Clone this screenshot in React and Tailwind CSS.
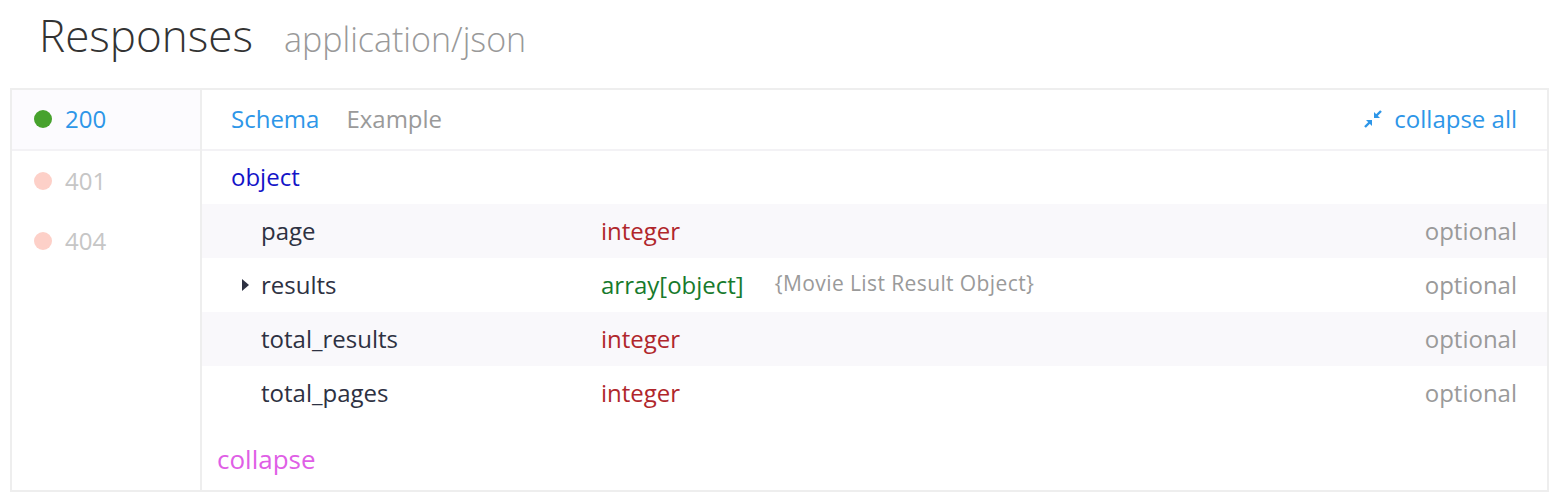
import React from 'react'

const font = { fontFamily: '"Open Sans", "Noto Sans", sans-serif' }

const rows = [
  { name: 'page', type: 'integer', color: 'text-[#b0262b]' },
  { name: 'results', type: 'array[object]', color: 'text-[#177a2c]', ref: '{Movie List Result Object}', caret: true },
  { name: 'total_results', type: 'integer', color: 'text-[#b0262b]' },
  { name: 'total_pages', type: 'integer', color: 'text-[#b0262b]' },
]

function CompressIcon() {
  return (
    <svg width="18" height="18" viewBox="0 0 18 18" className="text-[#2d96e8]">
      <path d="M17 1 L11 7" stroke="currentColor" strokeWidth="2.4" />
      <path d="M10 2 V8 H16 Z" fill="currentColor" />
      <path d="M1 17 L7 11" stroke="currentColor" strokeWidth="2.4" />
      <path d="M2 10 H8 V16 Z" fill="currentColor" />
    </svg>
  )
}

function Code({ code, active, dot }) {
  return (
    <div className={`h-[60px] flex items-center pl-[22px] gap-[13px] ${active ? 'bg-[#fcfbfe] border-b-2 border-[#f3f2f5] h-[61px] pb-[2px]' : ''}`}>
      <span className={`w-[18px] h-[18px] rounded-full ${dot}`} />
      <span className={`text-[24px] ${active ? 'text-[#2d96e8]' : 'text-[#c6c6c6]'}`}>{code}</span>
    </div>
  )
}

export default function App() {
  return (
    <div className="bg-white w-[1554px] h-[504px] overflow-hidden" style={font}>
      <div className="h-[88px] flex items-baseline pl-[39px] pt-[5px] gap-[31px]">
        <span className="text-[44px] font-light text-[#333333] leading-[60px]">Responses</span>
        <span className="text-[34px] font-light text-[#999999]">application/json</span>
      </div>
      <div className="ml-[10px] w-[1539px] h-[404px] border-2 border-[#eeeeee] flex">
        <div className="w-[190px] border-r-2 border-[#eeeeee] shrink-0">
          <Code code="200" active dot="bg-[#47a22d]" />
          <Code code="401" dot="bg-[#fdd0c8]" />
          <Code code="404" dot="bg-[#fdd0c8]" />
        </div>
        <div className="flex-1 flex flex-col">
          <div className="h-[61px] border-b-2 border-[#f3f2f5] flex items-center pl-[29px] pr-[30px] pb-[2px] text-[24px]">
            <span className="text-[#2d96e8]">Schema</span>
            <span className="text-[#9a9a9a] ml-[27px]">Example</span>
            <div className="ml-auto flex items-center gap-[12px] text-[#2d96e8]">
              <CompressIcon />
              <span>collapse all</span>
            </div>
          </div>
          <div className="h-[53px] flex items-center pl-[29px] pb-[2px] text-[24px] text-[#1414c8]">object</div>
          {rows.map((r, i) => (
            <div key={r.name} className={`h-[54px] flex items-center text-[24px] pr-[30px] ${i % 2 === 0 ? 'bg-[#f9f8fb]' : ''}`}>
              <div className="w-[399px] flex items-center pl-[40px]">
                <span className="w-[19px]">
                  {r.caret && (
                    <svg width="8" height="12" viewBox="0 0 8 12"><path d="M0 0 L7 6 L0 12 Z" fill="#2d3142" /></svg>
                  )}
                </span>
                <span className="text-[#2d3142]">{r.name}</span>
              </div>
              <span className={r.color}>{r.type}</span>
              {r.ref && <span className="ml-[31px] text-[21px] tracking-[0.4px] text-[#9a9a9a] -mt-[3px]">{r.ref}</span>}
              <span className="ml-auto text-[#9a9a9a]">optional</span>
            </div>
          ))}
          <div className="flex-1 flex items-center pl-[15px] text-[26px] text-[#df5fe6] pt-[8px]">collapse</div>
        </div>
      </div>
    </div>
  )
}
